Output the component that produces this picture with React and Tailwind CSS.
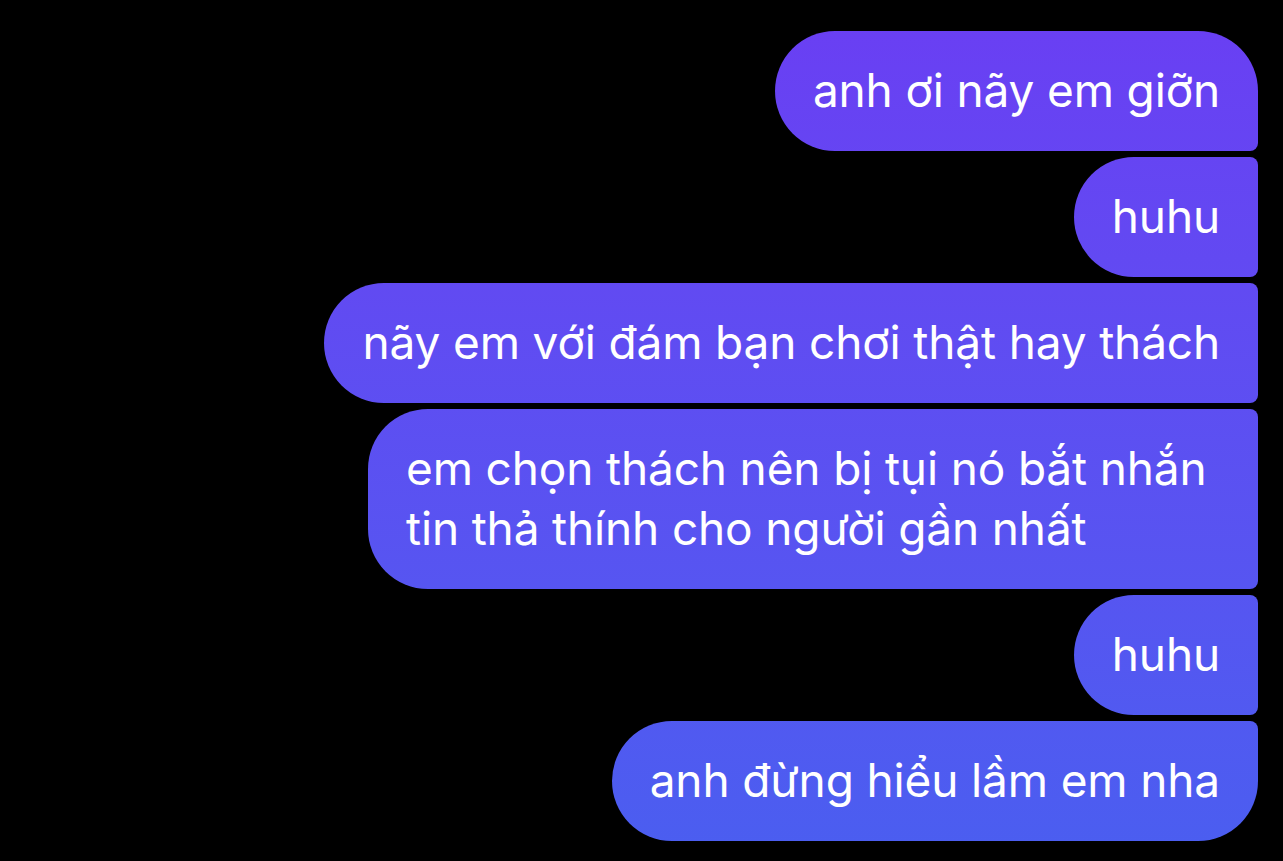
import React from 'react';

const messages = [
  { text: ['anh ơi nãy em giỡn'], shape: 'rounded-l-[60px] rounded-tr-[60px] rounded-br-[8px]' },
  { text: ['huhu'], shape: 'rounded-l-[60px] rounded-r-[8px]' },
  { text: ['nãy em với đám bạn chơi thật hay thách'], shape: 'rounded-l-[60px] rounded-r-[8px]' },
  { text: ['em chọn thách nên bị tụi nó bắt nhắn', 'tin thả thính cho người gần nhất'], shape: 'rounded-l-[60px] rounded-r-[8px] w-[890px]' },
  { text: ['huhu'], shape: 'rounded-l-[60px] rounded-r-[8px]' },
  { text: ['anh đừng hiểu lầm em nha'], shape: 'rounded-l-[60px] rounded-tr-[8px] rounded-br-[60px]' },
];

export default function App() {
  return (
    <div
      className="w-[1283px] h-[861px] bg-black overflow-hidden flex flex-col items-end gap-[6px] pt-[31px] pr-[25px]"
      style={{ fontFamily: 'Inter, "Noto Sans", sans-serif' }}
    >
      {messages.map((m, i) => (
        <div
          key={i}
          className={`px-[38px] pt-[29px] pb-[31px] whitespace-nowrap text-white text-[46px] leading-[60px] tracking-[-0.15px] bg-fixed bg-linear-to-b from-[#6a3ef3] to-[#4a5ef0] ${m.shape}`}
        >
          {m.text.map((line, j) => (
            <div key={j}>{line}</div>
          ))}
        </div>
      ))}
    </div>
  );
}
